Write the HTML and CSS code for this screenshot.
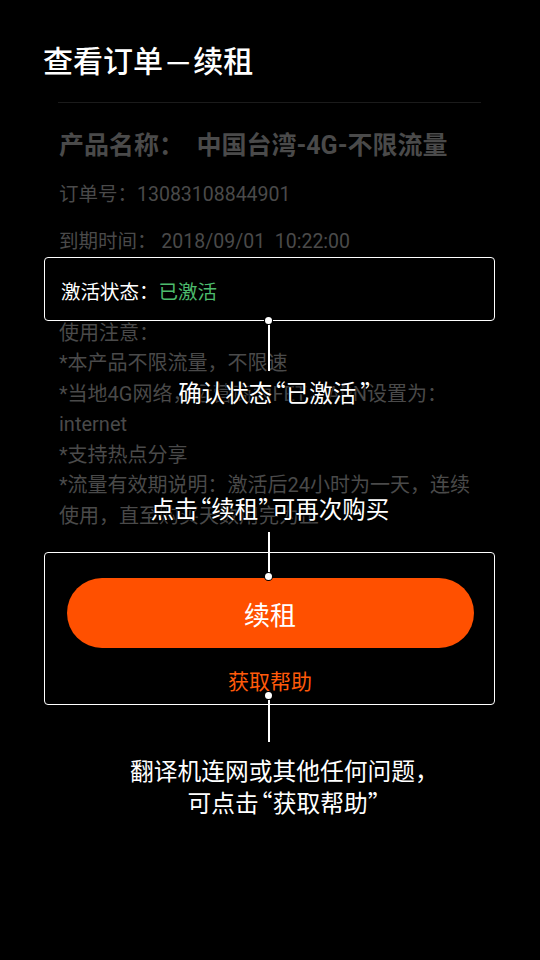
FILE: index.html
```html
<!DOCTYPE html>
<html lang="zh-CN">
<head>
<meta charset="utf-8">
<title>查看订单-续租</title>
<link rel="stylesheet" href="styles.css">
</head>
<body>
<div class="screen">
  <h1 class="title">查看订单<span class="dash">–</span>续租</h1>
  <div class="divider"></div>
  <section class="order">
    <p class="product">产品名称：&nbsp; 中国台湾-4G-不限流量</p>
    <p class="meta">订单号：13083108844901</p>
    <p class="meta">到期时间<span class="colon-c">：</span> 2018/09/01&nbsp;&nbsp;10:22:00</p>
    <p class="status">激活状态：<span class="status-ok">已激活</span></p>
    <div class="notes">
      <p>使用注意：</p>
      <p>*本产品不限流量，不限速</p>
      <p>*当地4G网络，运营商为FET，APN设置为：</p>
      <p>internet</p>
      <p>*支持热点分享</p>
      <p>*流量有效期说明：激活后24小时为一天，连续使用，直至购买天数用完为止</p>
    </div>
  </section>
  <div class="actions">
    <button class="renew" type="button">续租</button>
    <a class="help">获取帮助</a>
  </div>

  <div class="guide">
    <div class="frame frame-status"></div>
    <div class="stem stem-1"></div>
    <div class="dot dot-1"></div>
    <p class="caption caption-1">确认状态<span class="q-open">“</span>已激活<span class="q-close">”</span></p>

    <p class="caption caption-2">点击<span class="q-open">“</span>续租<span class="q-close">”</span>可再次购买</p>
    <div class="stem stem-2"></div>
    <div class="frame frame-actions"></div>
    <div class="dot dot-2"></div>

    <div class="stem stem-3"></div>
    <div class="dot dot-3"></div>
    <p class="caption caption-3">翻译机连网或其他任何问题，<br>可点击<span class="q-open">“</span>获取帮助<span class="q-close">”</span></p>
  </div>
</div>
</body>
</html>
```

FILE: styles.css
```css
* {
  margin: 0;
  padding: 0;
  box-sizing: border-box;
}

html, body {
  background: #000;
}

body {
  font-family: Roboto, "Noto Sans CJK SC", sans-serif;
}

.screen {
  position: relative;
  width: 540px;
  height: 960px;
  overflow: hidden;
  background: #000;
}

.title {
  font-family: "Noto Sans CJK SC", sans-serif;
  font-weight: 500;
  font-size: 30px;
  line-height: 40px;
  color: #fff;
  padding: 39px 0 0 43px;
}

.dash {
  display: inline-block;
  padding: 0 7px;
  transform: scaleX(1.6);
}

.divider {
  margin: 23px 0 0 58px;
  width: 423px;
  height: 1px;
  background: #1b1b1b;
}

.order {
  padding-left: 59px;
  width: 481px;
  color: #4a4a4a;
}

.product {
  font-size: 25px;
  font-weight: 700;
  line-height: 36px;
  margin-top: 25px;
}

.meta {
  font-size: 19.5px;
  line-height: 30px;
  margin-top: 15.5px;
}

.meta + .meta {
  margin-top: 15px;
}

.colon-c {
  font-family: "Noto Sans CJK TC", sans-serif;
}

.status {
  font-size: 19.5px;
  line-height: 30px;
  margin-top: 21.5px;
  color: #fff;
  padding-left: 2px;
}

.status-ok {
  color: #4dbb6d;
}

.notes {
  margin-top: 9.5px;
  font-size: 20px;
  line-height: 30.5px;
}

.actions {
  display: flex;
  flex-direction: column;
  align-items: center;
  margin-top: 47px;
}

.renew {
  width: 407px;
  height: 70px;
  border: 0;
  border-radius: 35px;
  background: #ff5000;
  color: #fff;
  font-family: "Noto Sans CJK SC", sans-serif;
  font-size: 26px;
}

.help {
  margin-top: 19px;
  font-size: 21px;
  line-height: 30px;
  color: #ff5a0a;
}

/* coach-mark overlay */
.guide {
  position: absolute;
  inset: 0;
  pointer-events: none;
}

.frame {
  position: absolute;
  left: 44px;
  width: 451px;
  border: 1px solid #fff;
  border-radius: 4px;
}

.frame-status {
  top: 257px;
  height: 64px;
}

.frame-actions {
  top: 552px;
  height: 153px;
}

.stem {
  position: absolute;
  left: 267.5px;
  width: 2px;
  background: #fff;
}

.stem-1 { top: 320px; height: 51px; }
.stem-2 { top: 532px; height: 44px; }
.stem-3 { top: 695px; height: 47px; }

.dot {
  position: absolute;
  left: 265px;
  width: 7px;
  height: 7px;
  border-radius: 50%;
  background: #fff;
  box-shadow: 0 0 0 1px #000;
}

.dot-1 { top: 316.5px; }
.dot-2 { top: 572.5px; }
.dot-3 { top: 691.5px; }

.caption {
  position: absolute;
  left: 0;
  right: 0;
  text-align: center;
  color: #fff;
  font-family: "Noto Sans CJK SC", sans-serif;
  font-size: 23.5px;
  line-height: 32px;
  text-shadow: 0 0 2px #000, 0 0 2px #000, 0 0 3px #000, 0 0 3px #000;
}

.q-open {
  margin-left: -10px;
}

.q-close {
  margin-right: -10px;
}

.caption-1 { top: 376px; left: 12px; }
.caption-1 .q-close { margin-left: 4px; }
.caption-2 { top: 492px; }
.caption-3 { top: 753.5px; left: 29px; font-size: 23.75px; }
```
